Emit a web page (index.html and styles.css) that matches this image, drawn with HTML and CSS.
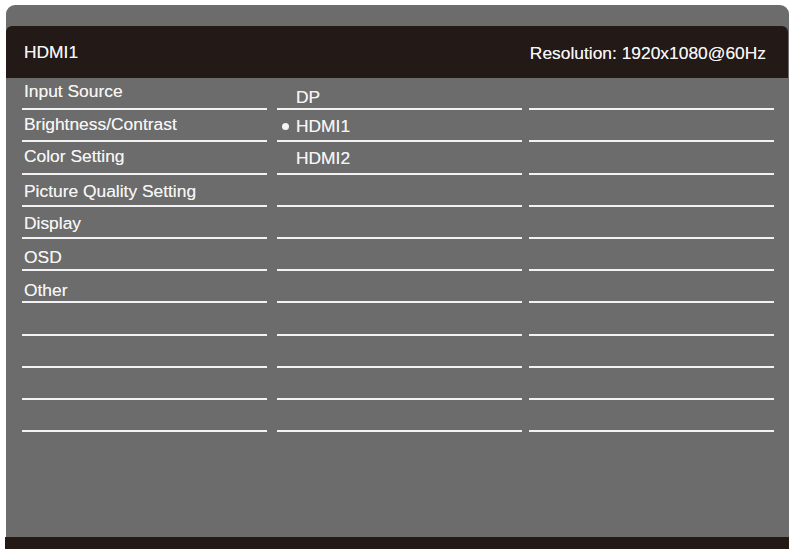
FILE: index.html
```html
<!DOCTYPE html>
<html lang="en">
<head>
<meta charset="utf-8">
<title>OSD Menu</title>
<link rel="stylesheet" href="styles.css">
</head>
<body>
<div class="monitor">
  <div class="screen">
    <div class="header">
      <span class="title">HDMI1</span>
      <span class="resolution">Resolution: 1920x1080@60Hz</span>
    </div>
    <div class="menu">
      <div class="col col-main">
        <div class="cell">Input Source</div>
        <div class="cell">Brightness/Contrast</div>
        <div class="cell">Color Setting</div>
        <div class="cell">Picture Quality Setting</div>
        <div class="cell">Display</div>
        <div class="cell">OSD</div>
        <div class="cell">Other</div>
        <div class="cell"></div>
        <div class="cell"></div>
        <div class="cell"></div>
        <div class="cell"></div>
      </div>
      <div class="col col-sub">
        <div class="cell cell-first">DP</div>
        <div class="cell"><span class="bullet"></span>HDMI1</div>
        <div class="cell">HDMI2</div>
        <div class="cell"></div>
        <div class="cell"></div>
        <div class="cell"></div>
        <div class="cell"></div>
        <div class="cell"></div>
        <div class="cell"></div>
        <div class="cell"></div>
        <div class="cell"></div>
      </div>
      <div class="col col-extra">
        <div class="cell"></div>
        <div class="cell"></div>
        <div class="cell"></div>
        <div class="cell"></div>
        <div class="cell"></div>
        <div class="cell"></div>
        <div class="cell"></div>
        <div class="cell"></div>
        <div class="cell"></div>
        <div class="cell"></div>
        <div class="cell"></div>
      </div>
    </div>
  </div>
  <div class="base"></div>
</div>
</body>
</html>
```

FILE: styles.css
```css
html, body {
  margin: 0;
  padding: 0;
  background: #ffffff;
}

body {
  padding: 5px 0 0 5px;
  font-family: "Liberation Sans", Arial, sans-serif;
  color: #f4f4f4;
  text-shadow: 0 0 0.6px rgba(255, 255, 255, 0.7);
}

.monitor {
  width: 784px;
}

.screen {
  height: 532px;
  margin-left: 1px;
  background: #6c6c6c;
  border-radius: 9px 9px 0 0;
  padding-top: 21px;
  box-sizing: border-box;
}

.header {
  height: 52px;
  margin-right: 1px;
  background: #231917;
  border-radius: 6px 6px 0 0;
  display: flex;
  align-items: center;
  justify-content: space-between;
  padding: 1px 22px 0 18px;
  box-sizing: border-box;
  font-size: 17.4px;
  line-height: 1;
}

.resolution {
  padding-top: 2px;
}

.menu {
  display: flex;
  padding-left: 16px;
}

.col {
  width: 245px;
  display: flex;
  flex-direction: column;
}

.col-sub {
  margin-left: 10px;
}

.col-extra {
  margin-left: 7px;
}

.cell {
  height: 32.2px;
  box-sizing: border-box;
  border-bottom: 2px solid #f2f2f2;
  font-size: 17.4px;
  line-height: 17px;
  white-space: nowrap;
}

.col-main .cell {
  padding: 5px 0 0 2px;
}

.col-main .cell:nth-child(2) { padding-top: 5.5px; }
.col-main .cell:nth-child(3) { padding-top: 6px; }
.col-main .cell:nth-child(4) { padding-top: 8px; }
.col-main .cell:nth-child(5) { padding-top: 8.5px; }
.col-main .cell:nth-child(6) { padding-top: 10.5px; }
.col-main .cell:nth-child(7) { padding-top: 10.5px; }

.col-sub .cell {
  padding: 7.5px 0 0 19px;
}

.col-sub .cell-first {
  padding-top: 11px;
}

.bullet {
  display: inline-block;
  width: 7px;
  height: 7px;
  border-radius: 50%;
  background: #f4f4f4;
  margin-left: -14px;
  margin-right: 7px;
  vertical-align: 2px;
}

.base {
  height: 12px;
  background: #231917;
}
```
